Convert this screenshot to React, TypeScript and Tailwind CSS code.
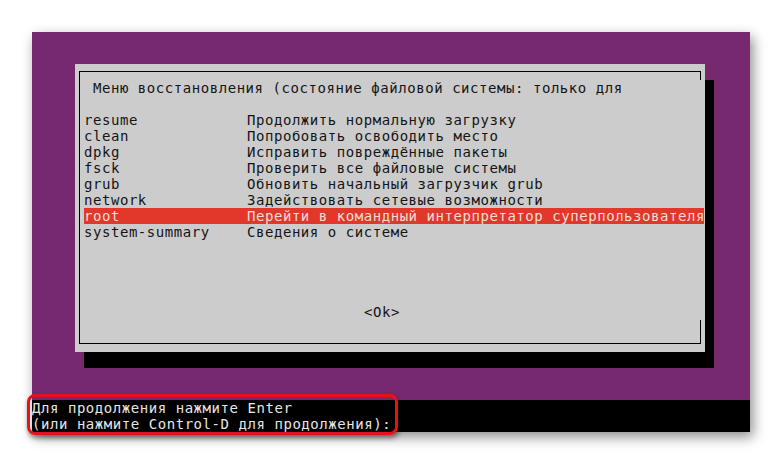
const items = [
  { name: "resume", desc: "Продолжить нормальную загрузку" },
  { name: "clean", desc: "Попробовать освободить место" },
  { name: "dpkg", desc: "Исправить повреждённые пакеты" },
  { name: "fsck", desc: "Проверить все файловые системы" },
  { name: "grub", desc: "Обновить начальный загрузчик grub" },
  { name: "network", desc: "Задействовать сетевые возможности" },
  { name: "root", desc: "Перейти в командный интерпретатор суперпользователя", active: true },
  { name: "system-summary", desc: "Сведения о системе" },
];

const mono = "font-['DejaVu_Sans_Mono','Liberation_Mono',monospace] text-[14px] tracking-[0.55px] leading-[16px]";

const App = () => {
  return (
    <div className="relative w-[782px] h-[463px] bg-white overflow-hidden">
      <div className="pl-[32px] pt-[32px]">
        <div className={`w-[718px] h-[400px] flex flex-col shadow-[3px_5px_12px_rgba(0,0,0,0.45)] ${mono}`}>
          {/* purple console area */}
          <div className="h-[368px] bg-[#77296f] pl-[43px] pt-[32px]">
            <div className="w-[630px] h-[288px] bg-[#cccccc] pt-[7px] pl-[4px] shadow-[9px_16px_0_0_#000]">
              <div className="w-[622px] h-[273px] border-l border-t border-b border-black flex flex-col text-[#151515]">
                <div className="h-[8px] border-r border-black" />
                <div className="h-[16px] pl-[4px] whitespace-pre">{" Меню восстановления (состояние файловой системы: только для"}</div>
                <div className="h-[16px]" />
                <div className="pl-[4px]">
                  {items.map((it) => (
                    <div
                      key={it.name}
                      className={`flex w-[620px] h-[16px] whitespace-pre ${
                        it.active ? "bg-[#e0392b] text-[#f6dcd6]" : ""
                      }`}
                    >
                      <span className="w-[163px] shrink-0">{it.name}</span>
                      <span>{it.desc}</span>
                    </div>
                  ))}
                </div>
                <div className="h-[64px]" />
                <div className="h-[16px] pl-[284px]">{"<Ok>"}</div>
                <div className="flex-1 border-r border-black" />
              </div>
            </div>
          </div>
          {/* black terminal lines */}
          <div className="h-[32px] bg-black text-[#e6e6e6] whitespace-pre">
            <div className="h-[16px]">Для продолжения нажмите Enter</div>
            <div className="h-[16px]">(или нажмите Control-D для продолжения):</div>
          </div>
        </div>
      </div>

      {/* annotation frame */}
      <div className="absolute left-[27px] top-[394px] w-[371px] h-[41px] border-[3px] border-[#e5121b] rounded-[8px] shadow-[1px_3px_5px_rgba(0,0,0,0.45)]" />
    </div>
  );
};

export default App;
